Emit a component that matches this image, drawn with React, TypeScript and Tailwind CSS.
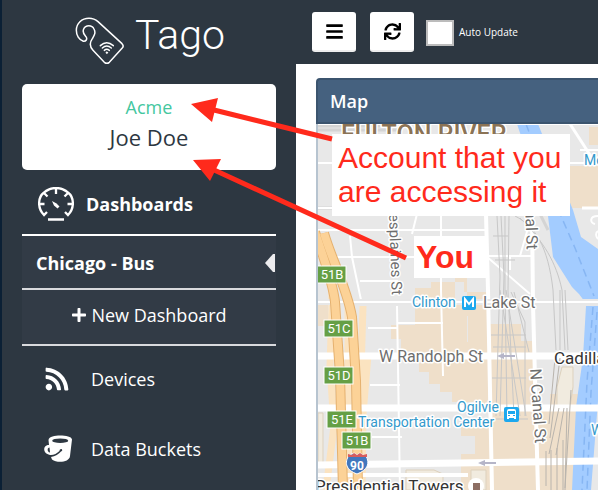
import type { ReactNode } from "react";
import { FaBars, FaPlus, FaRss, FaSync } from "react-icons/fa";

function TagLogo() {
  return (
    <svg viewBox="42 51 150 144" className="h-12 w-[50px]" fill="none" stroke="white" strokeWidth="4.500" strokeLinecap="round" aria-hidden="true">
      <path d="M130 187 L96 151 C84 138 87 126 94 116 C100 106 105 98 99 87 C93 74 74 74 68 87 C63 98 69 103 75 110 C80 117 75 125 67 124 C54 120 46 106 46 91 C46 70 62 55 84 55 C95 55 103 58 111 65 L183 131 Q190 138 183 145 L145 187 Q138 193 130 187Z" />
      <path d="M118 137 Q137 120 157 137 M124 144 Q137 132 151 144 M130 151 Q137 145 145 151" />
      <circle cx="137.500" cy="158" r="2.500" fill="white" strokeWidth="2" />
    </svg>
  );
}

function GaugeIcon() {
  return (
    <svg viewBox="0 0 36 34" className="h-[34px] w-9" fill="none" stroke="white" strokeWidth="2.300" aria-hidden="true">
      <path d="M9 25 L6 28 C-1 21 0 10 6 5.500 C13 -.5 23 -.5 30 5.500 C36 10 37 21 30 28 L27 25" />
      <path d="M18 1v6 M1.500 17h5 M34.500 17h-5 M6 6l3.500 3.500 M30 6l-3.500 3.500" />
      <path d="M10 32.500h16" strokeWidth="2.500" />
      <path d="M14 14l2 4.500 3.500 3 2-2-3-3z" fill="white" stroke="none" />
    </svg>
  );
}

function BucketIcon() {
  return (
    <svg viewBox="0 0 28 28" className="h-7 w-7" aria-hidden="true">
      <path fill="white" fillRule="evenodd" d="M4.500 5 C5 1.500 11 .5 16 .5 C22 .5 27.500 1.500 28 4.500 L26 21 C25.500 27.500 13 28.500 8 24.500 L7 22 C11 21.500 15 19 17 16.500 C18 16.500 18.500 15.500 18 14.500 C17 13.500 15.500 14.500 15.500 16 C13 18.500 9 20.500 6 20 C1 19 -.5 15.500 .5 12.500 C1.500 10.500 3.500 10 5 10 Z M5.500 12.500 C3 12.500 3 17 6 17.500 Z" />
      <ellipse cx="16.200" cy="5.700" rx="8" ry="2.300" fill="#2d3741" />
    </svg>
  );
}

const exits = [
  { name: "51B", x: 317, y: 266 },
  { name: "51C", x: 324, y: 320 },
  { name: "51D", x: 324, y: 367 },
  { name: "51E", x: 327, y: 411 },
  { name: "51B", x: 342, y: 432 },
];

function CityMap() {
  return (
    <svg viewBox="318 124 280 366" className="block w-full font-['Roboto',sans-serif]" role="img" aria-label="Map of Chicago">
      <rect x="318" y="124" width="280" height="366" fill="#e8e8e8" />
      <path fill="#efdfca" d="M589 127h9v18h-9z M570 166h28v42h-28z M415 288h16v-6h33v10h23v24h-20v-39h-12v24h12v41h20v60h-35v-10h-12v-8h-11v-12h-10v-11h-9v-10h-9v-12h-10v-14h24z M468 302h20v54h-20z M489 324h32v17h12v66h17v-13h34v80h-8l-2 16h-83z M432 356h56v50h-10v-30h-46z M461 421h30v69h-30v-36h14v-18h-14z M318 300h10v26h-10z M433 236h15v4h-15z" />
      <path fill="#f1ebdf" stroke="#ddd1bd" strokeWidth="1" d="M318 413h5v50h-5z M406 470h28l9 4v16h-37z M562 367h11v20l-3 20h-13v-20z M471 470h15v20h-15z" />
      <path fill="#a3ccff" d="M513 124h25l35 86 8 27 17 12v47h-17l-9-9-19-30-5-41-31-92z M576 290h22v12h-13z M586 306h12v95l-7 89h-19l4-83 7-50z" />
      <path fill="none" stroke="#87b6f3" strokeWidth="1.500" strokeDasharray="8 5" d="M526 124l35 92 14 32 19 48M593 307l-6 75-5 108M597 312l-6 80-4 98" />
      <path fill="none" stroke="#d4d4d4" strokeWidth="3" d="M318 126h62M318 130h80M318 208h18M510 210h28l10 20" />

      <g fill="none" stroke="#fbe3c0" strokeWidth="7">
        <path d="M331 268l1 38-2 60 4 60-8 64" />
        <path d="M363 306l-3 100-8 84M368 355l-5 60-1 75" />
        <path d="M348 300v190" />
      </g>
      <g fill="none" stroke="white">
        <path strokeWidth="2" d="M318 163h16M318 208h16M318 230h170M318 257h96M318 124h280M580 150h18M570 163h28" />
        <path strokeWidth="2" d="M417 214l-5 20M441 214v76l2 86M350 236l2 21 9 43M360 281h38M397 306l3 184M368 328h29M398 323h45M370 385h30M372 437h30M488 256h44M486 256l44 38M532 214l-12 42M510 256v14" />
        <path strokeWidth="7" d="M318 356h280M318 408h280M318 465l280-4" />
        <path strokeWidth="6" d="M318 302h280" />
        <path strokeWidth="4" d="M486 214l2 76 4 200M532 214l1 90 5 186M318 475h150" />
        <path strokeWidth="3" d="M570 124l22 34M582 208h16" />
        <path strokeWidth="2" d="M598 216c-9 0-8 7-3 8M598 231c-3 2-2 6 0 8" />
      </g>
      <path fill="none" stroke="#cfcfcf" strokeWidth="1" d="M318 300h280M318 304h280" />
      <g fill="none" stroke="#e5b16f" strokeWidth="10">
        <path d="M315 232c8 25 18 50 20 70l5 73 3 115" />
        <path d="M324 233c7 25 23 55 28 84l4 64 2 109" />
      </g>
      <g fill="none" stroke="#fcd297" strokeWidth="8">
        <path d="M315 232c8 25 18 50 20 70l5 73 3 115" />
        <path d="M324 233c7 25 23 55 28 84l4 64 2 109" />
      </g>
      <path fill="none" stroke="#c7c7c7" strokeWidth="1" d="M497 216l3 60-4 140M501 216l3 60-4 140M505 216v75l2 125M509 216l-1 75 6 125M500 290l20 126M506 290l20 126M511 292l14 30v94M514 292l15 60M493 236h15M495 260h20M491 335h35M493 347h33M492 378h34M494 419h34M515 216c20 10 33 30 38 74l3 60M520 218c24 24 36 44 42 72l3 60M560 290v60M565 290l3 60" />
      <path fill="none" stroke="#b9b4ad" strokeWidth="1" d="M555 358l-6 66M560 358l-10 80M559 408l-10 46M564 408l-8 47M567 408l-2 82M571 390l-6 98M546 451v35M551 450v40M557 448v42M563 440v50" />
      <path fill="none" stroke="#b5b5c8" strokeWidth="2" d="M501 356h14M482 463h14" />
      <path fill="#b5b5c8" d="M497 356l7-3v6zM478 463l7-3v6z" />

      <g stroke="white" strokeWidth="3" strokeLinejoin="round" paintOrder="stroke">
        <text x="341" y="143" fontSize="25" fontWeight="500" fill="#8b7355">FULTON RIVER</text>
        <g fontSize="16" fill="#6e6e6e">
          <text x="483" y="308">Lake St</text>
          <text x="379" y="362">W Randolph St</text>
          <text transform="translate(389 214) rotate(88)" fontSize="15">esplaines St</text>
          <text transform="translate(525 201) rotate(88)">anal St</text>
          <text transform="translate(530 369) rotate(86)">N Canal St</text>
        </g>
        <g fontSize="14" fill="#3399cc">
          <text x="412" y="307">Clinton</text>
          <text x="457" y="412">Ogilvie</text>
          <text x="358" y="427">Transportation Center</text>
          <text x="584" y="165">Mo</text>
          <text x="591" y="435">W</text>
        </g>
        <g fontSize="17" fill="#333333">
          <text x="554" y="364">Cadillac</text>
          <text x="315" y="492">Presidential Towers</text>
        </g>
      </g>

      <rect x="462" y="296" width="14" height="14" rx="2" fill="#1da8ee" />
      <path d="M465 307v-8l4 5 4-5v8" fill="none" stroke="white" strokeWidth="2" />
      <rect x="504" y="407" width="15" height="15" rx="2" fill="#1da8ee" />
      <path fillRule="evenodd" fill="white" d="M507 411q0-2 2-2h5q2 0 2 2v8h-2v-1h-5v1h-2zM508 411v3h7v-3zM508 416h2v-1h-2zM513 416h2v-1h-2z" />
      <circle cx="476" cy="486" r="8" fill="white" />
      <rect x="473" y="483" width="7" height="7" fill="#8d6e63" />

      {exits.map((exit) => (
        <g key={`${exit.name}-${exit.y}`}>
          <rect x={exit.x} y={exit.y} width="29" height="17" fill="#659f45" stroke="white" strokeWidth="1" />
          <text x={exit.x + 15} y={exit.y + 13} fontSize="13" textAnchor="middle" fill="white">{exit.name}</text>
        </g>
      ))}
      <path d="M349 455l3-1 2-1 3 2 3-2 3 2 3 1c4 7 2 14-9 18-11-4-13-11-8-19z" fill="#4277bd" stroke="white" strokeWidth="1" />
      <path d="M348 457v-3l4 1 2-2 3 2 3-2 3 2 4-1v3z" fill="#d65d5d" />
      <text x="357" y="470" fontSize="12" fontWeight="700" textAnchor="middle" fill="white">90</text>
    </svg>
  );
}

function NavLink({ icon, children, bold = false }: { icon: ReactNode; children: ReactNode; bold?: boolean }) {
  return (
    <a href="#" className={bold ? "flex h-16 items-center gap-3 pt-1 pl-4 font-bold" : "flex h-[70px] items-center pb-1 pl-[22px] font-medium"}>
      {bold ? icon : <span className="w-[47px]">{icon}</span>}
      <span>{children}</span>
    </a>
  );
}

export default function App() {
  return (
    <div className="relative flex h-screen overflow-hidden bg-white font-['Open_Sans',sans-serif] text-lg text-white">
      <aside className="w-[296px] shrink-0 border-l-2 border-[#0b2035] bg-[#2d3741] px-5">
        <div className="flex h-[84px] items-start gap-2.5 pt-[17px] pl-[53px]">
          <TagLogo />
          <span className="-mt-1.5 font-['Roboto',sans-serif] text-[41px] leading-[48px] font-light">Tago</span>
        </div>
        <div className="flex h-[86px] flex-col items-center rounded-[5px] bg-white pt-2">
          <span className="leading-[30px] font-medium text-[#44c79f]">Acme</span>
          <span className="text-[22px] leading-[30px] text-[#2d3741]">Joe Doe</span>
        </div>
        <nav>
          <NavLink bold icon={<GaugeIcon />}>Dashboards</NavLink>
          <div className="bg-[#323b46]">
            <a href="#" className="flex h-14 items-center justify-between border-y-2 border-t-white border-b-[#d9dadd] pt-0.5 pl-3.5 font-bold">
              Chicago - Bus
              <svg viewBox="0 0 10 18" className="mr-px h-[18px] w-2.5" aria-hidden="true">
                <path d="M0 9L8 0h2v18H8z" fill="#ececee" />
              </svg>
            </a>
            <a href="#" className="flex h-14 items-center justify-center gap-1 border-b-2 border-[#d9dadd] pb-1 font-medium">
              <FaPlus size={16} />
              New Dashboard
            </a>
          </div>
          <NavLink icon={<FaRss size={26} />}>Devices</NavLink>
          <NavLink icon={<BucketIcon />}>Data Buckets</NavLink>
        </nav>
      </aside>

      <div className="min-w-0 flex-1">
        <header className="flex h-16 items-center bg-[#2d3741] pl-4 text-black">
          <button type="button" aria-label="Menu" className="flex h-10 w-11 items-center justify-center rounded-[3px] border-b-2 border-[#eeeeee] bg-white">
            <FaBars size={19} />
          </button>
          <button type="button" aria-label="Refresh" className="mr-3 ml-3.5 flex h-10 w-11 items-center justify-center rounded-[3px] border-b-2 border-[#eeeeee] bg-white">
            <FaSync size={17} />
          </button>
          <label className="flex items-center gap-[5px] pt-0.5 text-[10px] font-medium whitespace-nowrap text-white">
            <input type="checkbox" className="h-[26px] w-7 appearance-none border-2 border-[#bcbcbc] bg-white" />
            Auto Update
          </label>
        </header>
        <main className="pt-3.5 pl-5">
          <section>
            <h2 className="flex h-[46px] items-center rounded-tl-sm border-2 border-r-0 border-[#3b546e] bg-[#45617f] pl-3 font-semibold">Map</h2>
            <div className="border-l-2 border-[#b7c4d0]">
              <CityMap />
            </div>
          </section>
        </main>
      </div>

      <p className="absolute top-[134px] left-[332px] w-[238px] bg-white py-[7px] pl-1.5 font-['Liberation_Sans',sans-serif] text-[30px] leading-[34px] whitespace-nowrap text-[#ff2a1c]">
        Account that you
        <br />
        are accessing it
      </p>
      <p className="absolute top-[236px] left-[414px] h-[42px] w-[73px] bg-white pl-0.5 font-['Liberation_Sans',sans-serif] text-[32px] leading-[42px] font-bold text-[#ff2a1c]">
        You
      </p>
      <svg viewBox="0 0 598 490" className="pointer-events-none absolute top-0 left-0 h-[490px] w-[598px]" aria-hidden="true">
        <path d="M210 109L332 139M212 169L406 258" stroke="#ff2a1c" strokeWidth="5" />
        <path d="M191 104l27-6-6 24zM193 160l28-1-11 22z" fill="#ff2a1c" />
      </svg>
    </div>
  );
}
